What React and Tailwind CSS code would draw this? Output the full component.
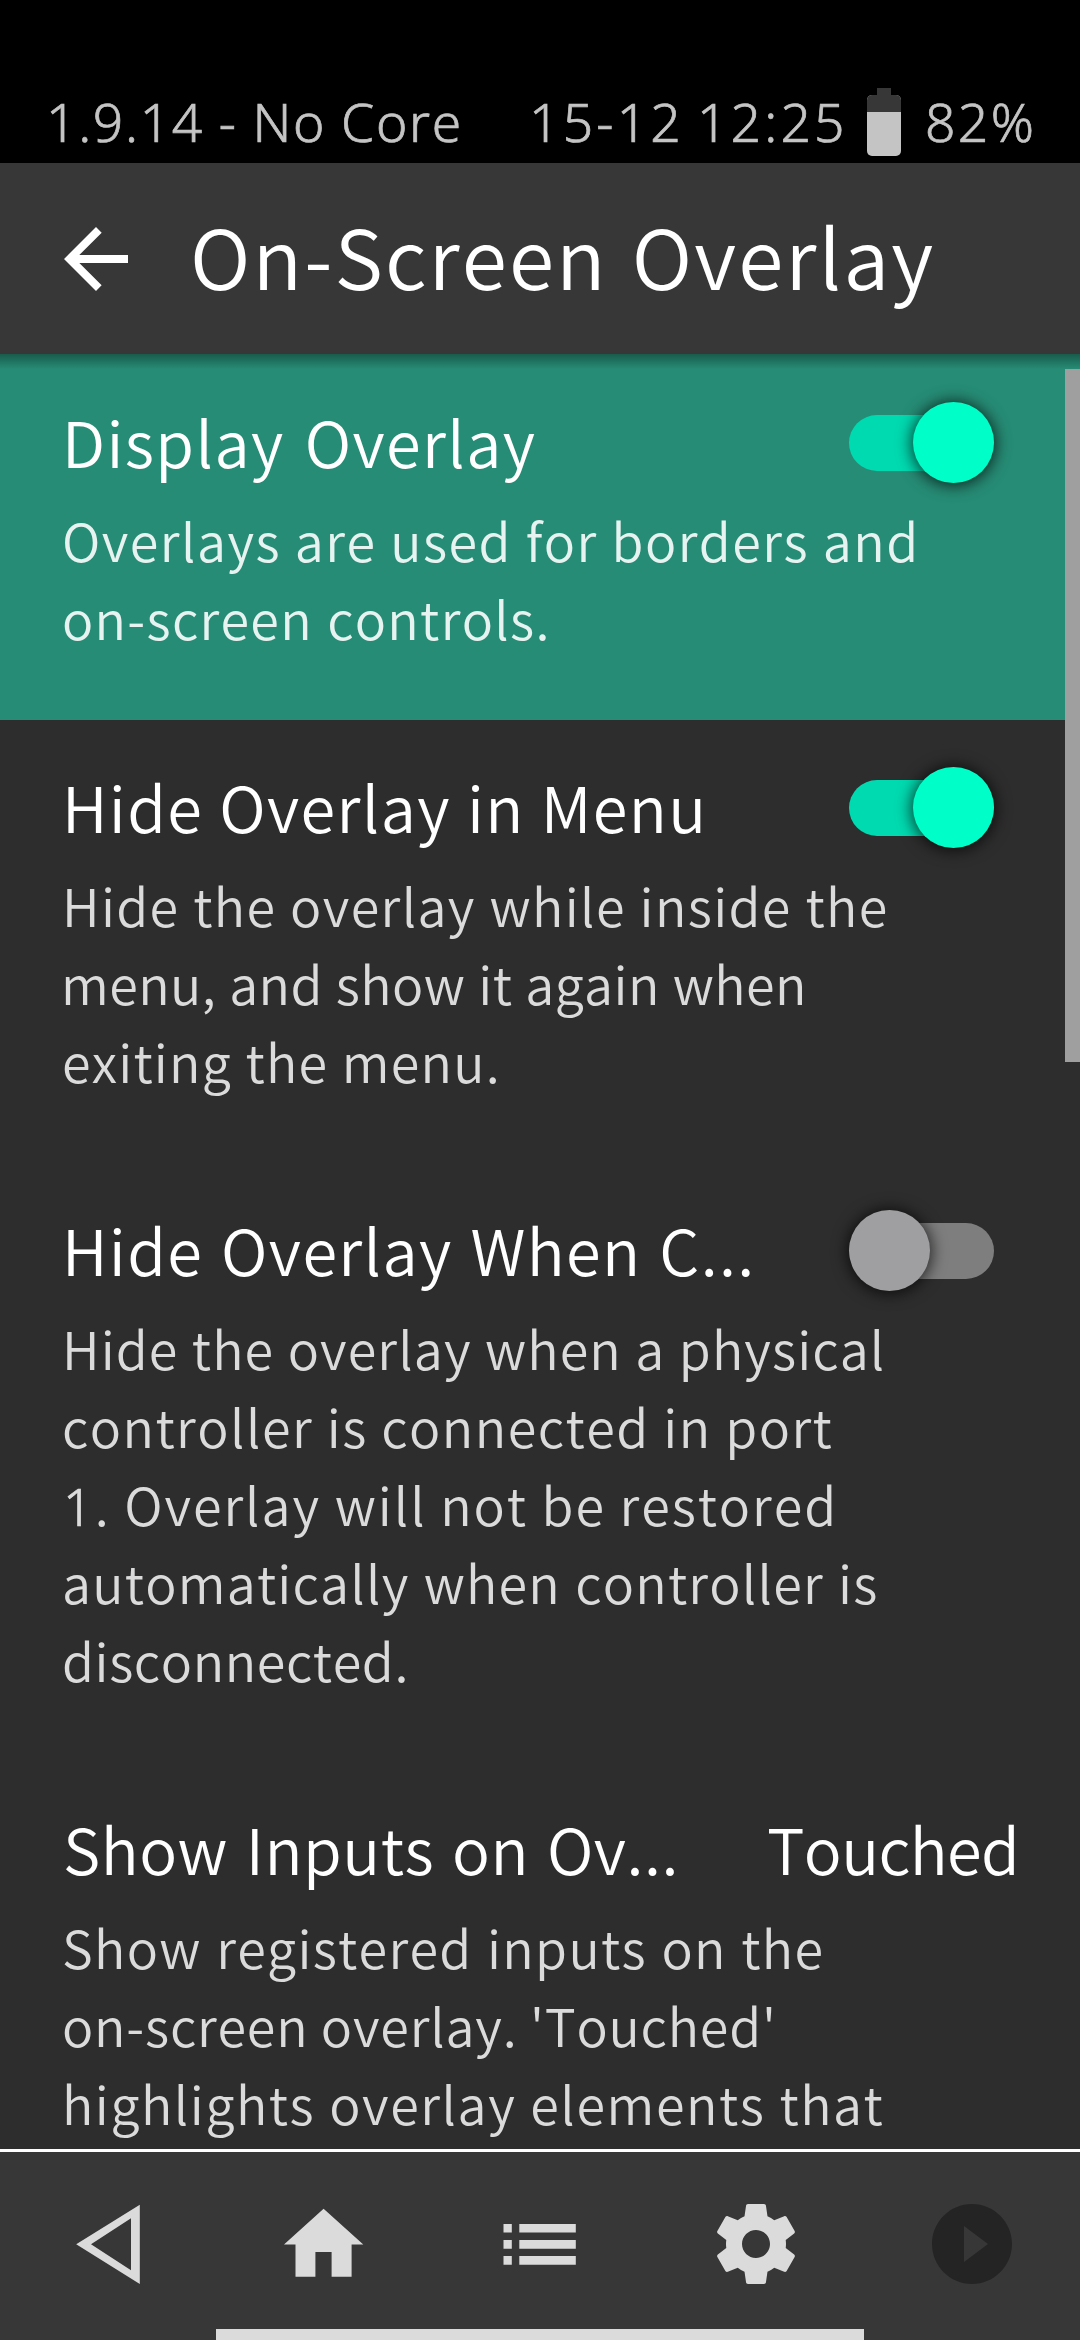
import React from "react";

const rows = [
  {
    title: "Display Overlay",
    titleClass: "indent-[1px] tracking-[1.4px] [word-spacing:4.5px]",
    toggle: true,
    selected: true,
    lines: [
      ["Overlays are used for borders and", "indent-[1px] tracking-[1.45px] [word-spacing:0.8px]"],
      ["on-screen controls.", "indent-[1px] tracking-[1.3px] [word-spacing:1.3px]"],
    ],
  },
  {
    title: "Hide Overlay in Menu",
    titleClass: "indent-[1px] tracking-[1.35px] [word-spacing:0.7px]",
    toggle: true,
    lines: [
      ["Hide the overlay while inside the", "indent-[1px] tracking-[1.35px] [word-spacing:0.8px]"],
      ["menu, and show it again when", "tracking-[0.4px] [word-spacing:1px]"],
      ["exiting the menu.", "indent-[1px] tracking-[1.2px] [word-spacing:0.8px]"],
    ],
  },
  {
    title: "Hide Overlay When C...",
    titleClass: "indent-[1px] tracking-[1.35px] [word-spacing:2.5px]",
    toggle: false,
    lines: [
      ["Hide the overlay when a physical", "indent-[1px] tracking-[1.1px] [word-spacing:0.7px]"],
      ["controller is connected in port", "indent-[1px] tracking-[1.45px] [word-spacing:0.6px]"],
      ["1. Overlay will not be restored", "indent-[2px] tracking-[1.95px] [word-spacing:0px]"],
      ["automatically when controller is", "indent-[1px] tracking-[1.2px] [word-spacing:1.4px]"],
      ["disconnected.", "indent-[1px] tracking-[0.6px]"],
    ],
  },
  {
    title: "Show Inputs on Ov...",
    titleClass: "indent-[2px] tracking-[0.5px] [word-spacing:3.3px]",
    value: "Touched",
    lines: [
      ["Show registered inputs on the", "indent-[1px] tracking-[1.3px] [word-spacing:1.6px]"],
      ["on-screen overlay. 'Touched'", "indent-[1px] tracking-[0.8px] [word-spacing:0px]"],
      ["highlights overlay elements that", "indent-[1px] tracking-[1.55px] [word-spacing:0.8px]"],
    ],
  },
];

function Battery() {
  return (
    <div className="flex h-[68px] w-[34px] flex-col items-center">
      <div className="h-[7px] w-[14px] bg-[#373737]" />
      <div className="flex w-full flex-1 flex-col overflow-hidden rounded-[5px] bg-[#c4c4c4]">
        <div className="h-[17px] bg-[#373737]" />
      </div>
    </div>
  );
}

function StatusBar() {
  return (
    <div className="flex h-[163px] items-end bg-black pb-[2px] pl-[46px] text-[53.3px] leading-[78px] font-light text-[#c4c4c4] [-webkit-text-stroke:0.7px_#c4c4c4] font-['Noto_Sans',sans-serif]">
      <div className="w-[483px] tracking-[1.7px] [word-spacing:-0.7px]">1.9.14 - No Core</div>
      <div className="w-[338px] tracking-[3.2px] [word-spacing:-4px]">15-12 12:25</div>
      <div className="flex h-[73px] w-[58px] items-start">
        <Battery />
      </div>
      <div className="tracking-[2.4px]">82%</div>
    </div>
  );
}

function Header() {
  return (
    <div className="flex h-[191px] items-center bg-[#373737] pl-12">
      <svg className="size-24 shrink-0 fill-white" viewBox="0 0 24 24">
        <path d="M20 11H7.83l5.59-5.59L12 4l-8 8 8 8 1.41-1.41L7.83 13H20v-2z" />
      </svg>
      <h1 className="ml-[46px] pb-[8px] text-[82px] leading-[120px] tracking-[2.1px] text-white [word-spacing:3.5px]">
        On-Screen Overlay
      </h1>
    </div>
  );
}

function Toggle({ on }) {
  return (
    <div className="relative mt-[1px] flex h-[81px] w-[145px] items-center">
      <div className={on ? "h-[56px] w-full rounded-full bg-[#00dab0]" : "h-[56px] w-full rounded-full bg-[#7e7e7e]"} />
      <div
        className={
          on
            ? "absolute right-0 size-[81px] rounded-full bg-[#00ffc8] shadow-[0_1px_15px_2px_rgba(0,0,0,0.7)]"
            : "absolute left-0 size-[81px] rounded-full bg-[#9f9fa1] shadow-[0_1px_15px_2px_rgba(0,0,0,0.7)]"
        }
      />
    </div>
  );
}

// A leading "1" is set in Noto Sans, whose figure has no foot serif.
function Line({ text, className }) {
  const m = text.match(/^1(.*)$/);
  return (
    <p className={className}>
      {m ? (
        <>
          <span className="font-['Noto_Sans',sans-serif] font-light [-webkit-text-stroke:0.7px_#dbdbdb]">1</span>
          {m[1]}
        </>
      ) : (
        text
      )}
    </p>
  );
}

function Row({ row }) {
  return (
    <div
      className={
        row.selected
          ? "bg-[#268c75] pt-[47px] pb-[63px] pl-[61px] text-[#e6f3f0]"
          : "pt-[46px] pb-[63px] pl-[61px] text-[#dbdbdb]"
      }
    >
      <div className="flex h-[80px] pr-[86px] text-[63px] leading-[80px] whitespace-nowrap text-white">
        <h2 className={"flex-1 " + row.titleClass}>{row.title}</h2>
        {row.value ? (
          <div className="w-[227px] tracking-[-0.6px]">{row.value}</div>
        ) : (
          <Toggle on={row.toggle} />
        )}
      </div>
      <div className="mt-5 text-[52px] leading-[78px] whitespace-nowrap">
        {row.lines.map(([t, c]) => (
          <Line key={t} text={t} className={"h-[78px] " + c} />
        ))}
      </div>
    </div>
  );
}

function NavIcon({ children, dim, box = "0 0 96 96" }) {
  return (
    <svg viewBox={box} className={dim ? "size-24 fill-[#242424]" : "size-24 fill-[#dbdbdb]"}>
      {children}
    </svg>
  );
}

function BottomBar() {
  return (
    <div className="h-[191px] border-t-[3px] border-white bg-[#373737] pt-11">
      <div className="grid grid-cols-5 justify-items-center">
        <NavIcon>
          <path fillRule="evenodd" d="M16.2 48.3L79.8 8.7V88zM31 48.3L71 74.3V22.3z" />
        </NavIcon>
        <NavIcon>
          <path d="M47.6 12.7L87.3 48.4H75.6V80.7H55.6V56H39.4V80.7H19.5V48.4H8z" />
        </NavIcon>
        <NavIcon>
          <path d="M11.5 28h8.3v8.6h-8.3zM11.5 44.1h8.3v8.6h-8.3zM11.5 60.1h8.3v8.6h-8.3zM27.3 28h56.5v8.6H27.3zM27.3 44.1h56.5v8.6H27.3zM27.3 60.1h56.5v8.6H27.3z" />
        </NavIcon>
        <NavIcon box="0 0 24 24">
          <path d="M19.43 12.98c.04-.32.07-.64.07-.98s-.03-.66-.07-.98l2.11-1.65c.19-.15.24-.42.12-.64l-2-3.46c-.12-.22-.39-.3-.61-.22l-2.49 1c-.52-.4-1.08-.73-1.69-.98l-.38-2.65C14.46 2.18 14.25 2 14 2h-4c-.25 0-.46.18-.49.42l-.38 2.65c-.61.25-1.17.59-1.69.98l-2.49-1c-.23-.09-.49 0-.61.22l-2 3.46c-.13.22-.07.49.12.64l2.11 1.65c-.04.32-.07.65-.07.98s.03.66.07.98l-2.11 1.65c-.19.15-.24.42-.12.64l2 3.46c.12.22.39.3.61.22l2.49-1c.52.4 1.08.73 1.69.98l.38 2.65c.03.24.24.42.49.42h4c.25 0 .46-.18.49-.42l.38-2.65c.61-.25 1.17-.59 1.69-.98l2.49 1c.23.09.49 0 .61-.22l2-3.46c.12-.22.07-.49-.12-.64l-2.11-1.65zM12 15.5c-1.93 0-3.5-1.57-3.5-3.5s1.57-3.5 3.5-3.5 3.5 1.57 3.5 3.5-1.57 3.5-3.5 3.5z" />
        </NavIcon>
        <NavIcon box="0 0 24 24" dim>
          <path d="M12 2C6.48 2 2 6.48 2 12s4.48 10 10 10 10-4.48 10-10S17.52 2 12 2zm-2 14.5v-9l6 4.5-6 4.5z" />
        </NavIcon>
      </div>
      <div className="mx-auto mt-[37px] h-[11px] w-[648px] bg-[#dbdbdb]" />
    </div>
  );
}

export default function App() {
  return (
    <div className="flex h-[2340px] w-[1080px] flex-col overflow-hidden bg-[#2d2d2d] font-['Noto_Sans_CJK_JP','Noto_Sans',sans-serif] font-[350] [font-kerning:none]">
      <StatusBar />
      <Header />
      <main className="relative h-[1795px] overflow-hidden">
        {rows.map((r) => (
          <Row key={r.title} row={r} />
        ))}
        <div className="absolute inset-x-0 top-0 h-[15px] bg-linear-to-b from-black/35 to-transparent" />
        <div className="absolute top-[15px] right-0 h-[693px] w-[15px] bg-[#9f9f9f]" />
      </main>
      <BottomBar />
    </div>
  );
}
